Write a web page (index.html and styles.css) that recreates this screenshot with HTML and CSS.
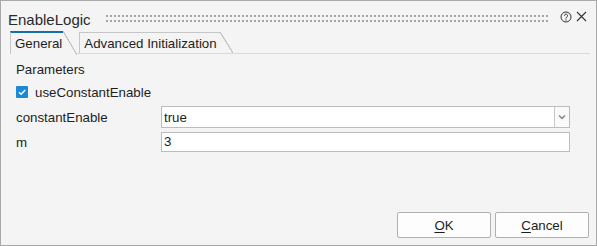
FILE: index.html
```html
<!DOCTYPE html>
<html>
<head>
<meta charset="utf-8">
<link rel="stylesheet" href="styles.css">
</head>
<body>
<div class="window">
  <div class="titlebar">
    <span class="title">EnableLogic</span>
    <span class="grip"></span>
    <svg class="help" width="12" height="12" viewBox="0 0 12 12">
      <circle cx="6" cy="6" r="5" fill="none" stroke="#333" stroke-width="1"/>
      <path d="M4.4 4.7a1.6 1.6 0 1 1 2.4 1.4c-.6.3-.8.6-.8 1.2v.3" fill="none" stroke="#333" stroke-width="1"/>
      <circle cx="6" cy="8.9" r="0.65" fill="#333"/>
    </svg>
    <svg class="close" width="11" height="11" viewBox="0 0 11 11">
      <path d="M1 1L10 10M10 1L1 10" stroke="#333" stroke-width="1.1" fill="none"/>
    </svg>
  </div>
  <div class="tabbar">
    <div class="tab active">General</div>
    <div class="tab">Advanced Initialization</div>
  </div>
  <div class="content">
    <div class="section">Parameters</div>
    <label class="check">
      <span class="box">
        <svg width="12" height="12" viewBox="0 0 12 12"><path d="M3 6.2L5.1 8.2L9.2 3.9" fill="none" stroke="#fff" stroke-width="1.5"/></svg>
      </span>
      useConstantEnable
    </label>
    <div class="grid">
      <div class="label">constantEnable</div>
      <div class="combo">
        <span class="value">true</span>
        <span class="drop">
          <svg width="8" height="6" viewBox="0 0 8 6"><path d="M1 1.5L4 4.3L7 1.5" fill="none" stroke="#8a8a8a" stroke-width="1.6"/></svg>
        </span>
      </div>
      <div class="label">m</div>
      <div class="input">3</div>
    </div>
  </div>
  <div class="buttons">
    <button class="btn"><u>O</u>K</button>
    <button class="btn"><u>C</u>ancel</button>
  </div>
</div>
</body>
</html>
```
FILE: styles.css
```css
* { box-sizing: border-box; }
html, body { margin: 0; padding: 0; }
body {
  font-family: "Liberation Sans", Arial, sans-serif;
  font-size: 13.3px;
  color: #1e1e1e;
  background: #f4f4f4;
}
.window {
  width: 597px;
  height: 246px;
  border: 1px solid #a9a9a9;
  background: #f4f4f4;
  display: flex;
  flex-direction: column;
}
.titlebar {
  height: 30px;
  display: flex;
  align-items: center;
  padding-left: 7px;
  padding-right: 9px;
}
.title {
  font-size: 15px;
  line-height: 18px;
  padding-top: 8px;
  color: #2a2a2a;
}
.grip {
  flex: 1;
  align-self: flex-start;
  margin: 14px 12px 0 15px;
  height: 9px;
  background-color: #a4a4a4;
  background-image:
    linear-gradient(90deg, transparent 2px, #f4f4f4 2px),
    linear-gradient(transparent 2px, #f4f4f4 2px);
  background-size: 4px 100%, 100% 5px;
}
.help { margin-top: 1px; }
.close { margin-left: 4px; margin-top: 1px; }

.tabbar {
  height: 23px;
  margin: 0 6px 0 9px;
  border-bottom: 1px solid #d9d9d9;
  display: flex;
  align-items: flex-start;
}
.tab {
  position: relative;
  height: 21px;
  margin-top: 1px;
  margin-right: 16px;
  padding: 3px 3px 0 4px;
  line-height: 15px;
  border-left: 1px solid #c6c6c6;
  border-top: 1px solid #c6c6c6;
  background: #f4f4f4;
  white-space: nowrap;
}
.tab::after {
  content: "";
  position: absolute;
  left: 100%;
  top: -1px;
  bottom: 0;
  width: 13px;
  background: linear-gradient(to top right,
    #f4f4f4 calc(50% - 0.8px),
    #c6c6c6 calc(50% - 0.5px),
    #c6c6c6 calc(50% + 0.5px),
    transparent calc(50% + 0.8px));
}
.tab.active {
  height: 23px;
  margin-top: 0;
  margin-right: 16px;
  padding: 3px 1px 0 4px;
  border-top: 2px solid #1570a6;
  z-index: 1;
}
.tab.active::after {
  top: -2px;
  bottom: -1px;
  width: 14px;
}

.content {
  flex: 1;
  padding: 7px 26px 0 15px;
}
.section {
  line-height: 17px;
}
.check {
  margin-top: 4px;
  height: 20px;
  display: flex;
  align-items: center;
  line-height: 17px;
}
.box {
  width: 12px;
  height: 12px;
  background: #1a8ad6;
  border-radius: 1px;
  margin-right: 7px;
  display: flex;
}
.grid {
  margin-top: 4px;
  display: grid;
  grid-template-columns: 145px 1fr;
  grid-template-rows: 22px 20px;
  row-gap: 4px;
  align-items: center;
}
.label { line-height: 17px; }
.combo {
  height: 22px;
  background: #fff;
  border: 1px solid #bcbcbc;
  display: flex;
  align-items: center;
}
.value { flex: 1; padding-left: 2px; line-height: 17px; }
.drop {
  width: 15px;
  height: 100%;
  border-left: 1px solid #c8c8c8;
  background: #fafafa;
  display: flex;
  align-items: center;
  justify-content: center;
}
.input {
  height: 20px;
  background: #fff;
  border: 1px solid #bcbcbc;
  padding-left: 2px;
  line-height: 17px;
}

.buttons {
  display: flex;
  justify-content: flex-end;
  gap: 4px;
  padding: 0 7px 7px 0;
}
.btn {
  width: 94px;
  height: 26px;
  border: 1px solid #b0b0b0;
  border-radius: 2px;
  background: #fdfdfd;
  font-family: "Liberation Sans", Arial, sans-serif;
  font-size: 13.3px;
  color: #1e1e1e;
  padding: 0;
}
.btn u { text-underline-offset: 2px; }
```
